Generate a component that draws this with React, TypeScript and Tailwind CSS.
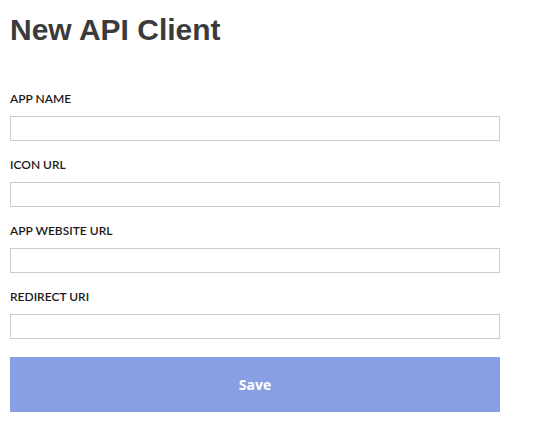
import React from "react";

const fields = ["APP NAME", "ICON URL", "APP WEBSITE URL", "REDIRECT URI"];

export default function App() {
  return (
    <div className="min-h-screen bg-white pl-[10px] pt-[13px]" style={{ fontFamily: '"Liberation Sans", Arial, sans-serif' }}>
      <h1 className="text-[30px] leading-[34px] font-bold text-[#3b3b3b] [font-family:'Liberation_Sans',Arial,sans-serif]">New API Client</h1>
      <form className="mt-[45px] flex w-[490px] flex-col" onSubmit={(e) => e.preventDefault()}>
        {fields.map((f) => (
          <div key={f} className="flex flex-col">
            <label className="h-[24px] text-[12px] leading-[14px] font-semibold text-[#1a1a1a] [font-family:Lato,sans-serif]">{f}</label>
            <input className="mb-[17px] h-[25px] w-[490px] border border-[#cccccc] bg-white outline-none" />
          </div>
        ))}
        <button
          type="submit"
          className="mt-[1px] h-[55px] w-[490px] bg-[#889fe6] text-[14px] font-bold text-white [font-family:'Open_Sans',sans-serif]"
        >
          Save
        </button>
      </form>
    </div>
  );
}
